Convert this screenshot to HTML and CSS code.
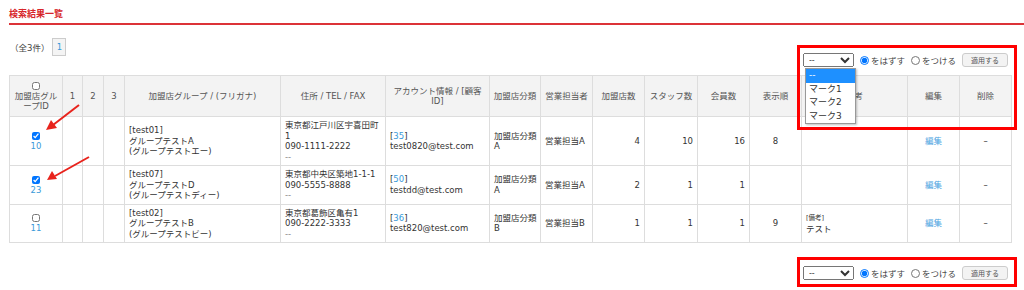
FILE: index.html
```html
<!DOCTYPE html>
<html>
 <head>
 <meta charset="UTF-8">
 <title>検索結果一覧</title>
 <link rel="stylesheet" href="styles.css">
 </head>
 <body>
 <div class="page">

  <h2 class="ttl">検索結果一覧</h2>

  <div class="bar">
   <div class="pager">
    <span class="count">（全3件）</span>
    <span class="pg">1</span>
   </div>
   <div class="tools">
    <select><option>--</option><option>マーク1</option><option>マーク2</option><option>マーク3</option></select>
    <label><input type="radio" name="m1" checked>をはずす</label>
    <label><input type="radio" name="m1">をつける</label>
    <button class="apply">適用する</button>
   </div>
  </div>

  <table class="list">
   <colgroup>
    <col style="width:53px"><col style="width:20px"><col style="width:21px"><col style="width:21px">
    <col style="width:156px"><col style="width:105px"><col style="width:104px"><col style="width:51px">
    <col style="width:52px"><col style="width:52px"><col style="width:53px"><col style="width:52px">
    <col style="width:52px"><col style="width:106px"><col style="width:52px"><col style="width:52px">
   </colgroup>
   <tr class="head">
    <th><input type="checkbox" class="chk"><br>加盟店グループID</th>
    <th>1</th><th>2</th><th>3</th>
    <th>加盟店グループ / (フリガナ)</th>
    <th>住所 / TEL / FAX</th>
    <th>アカウント情報 / [顧客ID]</th>
    <th>加盟店分類</th>
    <th>営業担当者</th>
    <th>加盟店数</th>
    <th>スタッフ数</th>
    <th>会員数</th>
    <th>表示順</th>
    <th>備考</th>
    <th>編集</th>
    <th>削除</th>
   </tr>
   <tr class="r4">
    <td class="c"><input type="checkbox" class="chk" checked><br><a href="#">10</a></td>
    <td></td><td></td><td></td>
    <td>[test01]<br>グループテストA<br>(グループテストエー)</td>
    <td>東京都江戸川区宇喜田町1<br>090-1111-2222<br><span class="dim">--</span></td>
    <td>[<a href="#">35</a>]<br>test0820@test.com</td>
    <td class="k">加盟店分類<br>A</td>
    <td>営業担当A</td>
    <td class="n">4</td>
    <td class="n">10</td>
    <td class="n">16</td>
    <td class="c">8</td>
    <td></td>
    <td class="c"><a href="#" class="edit">編集</a></td>
    <td class="c">–</td>
   </tr>
   <tr class="r3">
    <td class="c"><input type="checkbox" class="chk" checked><br><a href="#">23</a></td>
    <td></td><td></td><td></td>
    <td>[test07]<br>グループテストD<br>(グループテストディー)</td>
    <td>東京都中央区築地1-1-1<br>090-5555-8888<br><span class="dim">--</span></td>
    <td>[<a href="#">50</a>]<br>testdd@test.com</td>
    <td class="k">加盟店分類<br>A</td>
    <td>営業担当A</td>
    <td class="n">2</td>
    <td class="n">1</td>
    <td class="n">1</td>
    <td class="c"></td>
    <td></td>
    <td class="c"><a href="#" class="edit">編集</a></td>
    <td class="c">–</td>
   </tr>
   <tr class="r3">
    <td class="c"><input type="checkbox" class="chk"><br><a href="#">11</a></td>
    <td></td><td></td><td></td>
    <td>[test02]<br>グループテストB<br>(グループテストビー)</td>
    <td>東京都葛飾区亀有1<br>090-2222-3333<br><span class="dim">--</span></td>
    <td>[<a href="#">36</a>]<br>test820@test.com</td>
    <td class="k">加盟店分類<br>B</td>
    <td>営業担当B</td>
    <td class="n">1</td>
    <td class="n">1</td>
    <td class="n">1</td>
    <td class="c">9</td>
    <td><span class="note">[備考]</span><br>テスト</td>
    <td class="c"><a href="#" class="edit">編集</a></td>
    <td class="c">–</td>
   </tr>
  </table>

  <div class="foot">
   <div class="tools">
    <select><option>--</option></select>
    <label><input type="radio" name="m2" checked>をはずす</label>
    <label><input type="radio" name="m2">をつける</label>
    <button class="apply">適用する</button>
   </div>
  </div>

  <!-- open dropdown of the upper select -->
  <div class="droplist">
   <div class="opt sel">--</div>
   <div class="opt">マーク1</div>
   <div class="opt">マーク2</div>
   <div class="opt">マーク3</div>
  </div>

  <!-- annotations -->
  <div class="mark mark-top"></div>
  <div class="mark mark-bottom"></div>
  <svg class="arrows" width="120" height="200" viewBox="0 0 120 200">
   <line x1="79" y1="105" x2="53" y2="125" stroke="#e8231c" stroke-width="2"/>
   <polygon points="46,130 51,120 57,128" fill="#e8231c"/>
   <line x1="89" y1="157" x2="55" y2="176" stroke="#e8231c" stroke-width="2"/>
   <polygon points="47,180 52,171 57,179" fill="#e8231c"/>
  </svg>

 </div>
 </body>
</html>
```

FILE: styles.css
```css
BODY  { margin: 0; background: #fff; color: #333;
        font-family: "DejaVu Sans", "Noto Sans CJK JP", sans-serif; font-size: 8.5px; }
A     { color: #3a9ad9; text-decoration: none; }

.page { position: relative; padding-left: 9px; height: 290px; overflow: hidden; }

.ttl  { margin: 0; padding: 9px 0 4px 0; font-size: 9px; line-height: 10px;
        color: #d7262b; font-weight: bold; border-bottom: 2px solid #dc3338; }

/* pager + mark tools */
.bar    { display: flex; justify-content: space-between; align-items: flex-start;
          width: 1002px; margin-top: 13px; }
.pager  { display: flex; align-items: center; height: 18px; }
.count  { color: #444; margin-left: 1px; }
.pg     { width: 12px; height: 16px; margin-left: 3px; border: 1px solid #ccc; background: #f4f4f4;
          color: #3a9ad9; display: flex; align-items: center; justify-content: center; }

.tools        { display: flex; align-items: center; height: 14px; margin-top: 15px; margin-right: 3px; }
.tools SELECT { width: 51px; height: 14px; font-size: 8px; padding: 0 1px; margin: 0;
                font-family: "DejaVu Sans", sans-serif; color: #333; }
.tools LABEL  { display: flex; align-items: center; color: #444; font-size: 8.5px; }
.tools INPUT  { width: 9px; height: 9px; margin: 0 2px 0 6px; }
.apply        { width: 46px; height: 14px; margin-left: 6px; padding: 0; font-size: 7px;
                font-family: "Noto Sans CJK JP", sans-serif; color: #555;
                background: #f3f3f3; border: 1px solid #ccc; border-radius: 3px; }

.foot { display: flex; justify-content: flex-end; width: 1002px; margin-top: 8px; }

/* result table */
TABLE.list  { width: 1002px; border-collapse: collapse; table-layout: fixed; margin-top: 8px; }
.list TH,
.list TD    { border: 1px solid #ddd; padding: 3px 4px; line-height: 10.5px; vertical-align: middle; }
.list TH    { background: #f3f3f3; color: #555; font-weight: normal; text-align: center; padding: 3px 2px; }
.list TD.c  { text-align: center; }
.list TD.n  { text-align: right; padding-right: 4px; }
.list TD.k  { padding: 3px 1px 3px 4px; white-space: nowrap; }
.head       { height: 41px; }
.r4         { height: 48px; }
.r3         { height: 38px; }
.chk        { width: 8px; height: 8px; margin: 0; vertical-align: middle; }
.dim        { color: #888; }
.note       { font-size: 6.5px; }
.edit       { color: #4aa3df; }

/* open select list */
.droplist   { position: absolute; left: 805px; top: 68px; width: 49px; background: #fff;
              border: 1px solid #999; box-shadow: 1px 1px 2px rgba(0,0,0,.25); }
.opt        { height: 13.5px; line-height: 13.5px; padding-left: 3px; font-size: 9px; color: #333; }
.opt.sel    { background: #1e90ff; color: #fff; }

/* red annotation boxes */
.mark        { position: absolute; left: 797px; width: 220px; border: 3px solid #f00; box-sizing: border-box; }
.mark-top    { top: 45px; height: 85px; }
.mark-bottom { top: 257px; height: 30px; }
.arrows      { position: absolute; left: 0; top: 0; }
```
